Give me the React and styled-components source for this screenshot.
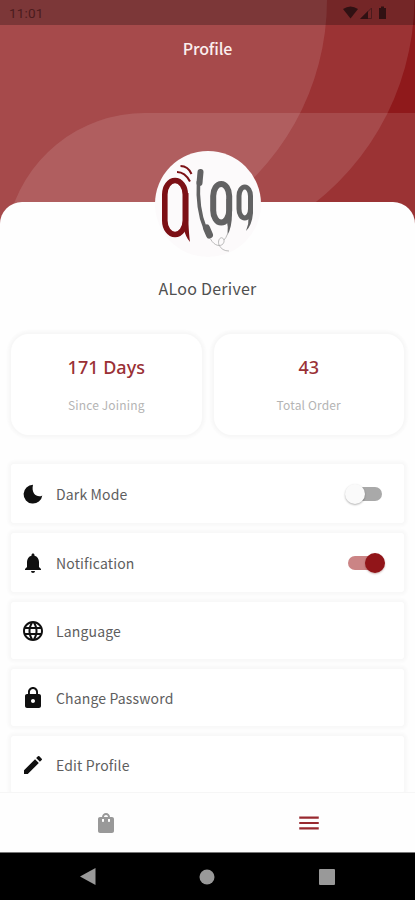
import styled, { createGlobalStyle } from 'styled-components';
import { useState } from 'react';
import {
  MdNotifications, MdLanguage, MdLock, MdEdit, MdShoppingBag, MdMenu,
} from 'react-icons/md';

const GlobalStyle = createGlobalStyle`
  * {
    box-sizing: border-box;
  }
  body {
    margin: 0;
    background: #fff;
    font-family: 'Noto Sans CJK SC', 'Noto Sans', sans-serif;
  }
`;

const Screen = styled.div`
  width: 415px;
  height: 900px;
  display: flex;
  flex-direction: column;
  overflow: hidden;
  background: #fefefe;
`;

const Header = styled.header`
  position: relative;
  z-index: 0;
  flex: none;
  height: 224px;
  background: #8f191b;
`;

const Waves = styled.svg`
  position: absolute;
  top: 0;
  left: 0;
  z-index: -1;
`;

const StatusBar = styled.div`
  height: 25px;
  padding: 0 27px 0 9px;
  display: flex;
  align-items: center;
  justify-content: space-between;
  background: rgba(0, 0, 0, 0.25);
  color: #4b1b1d;
  font-family: Roboto, sans-serif;
  font-size: 13.5px;
  letter-spacing: 0.2px;
`;

const Title = styled.h1`
  margin: 0;
  height: 46px;
  line-height: 46px;
  text-align: center;
  color: #fbeeee;
  font-size: 16px;
  font-weight: 500;
  letter-spacing: -0.15px;
`;

const Sheet = styled.main`
  position: relative;
  flex: 1;
  min-height: 0;
  margin-top: -22px;
  padding: 0 10px;
  display: flex;
  flex-direction: column;
  border-radius: 22px 22px 0 0;
  background: #fefefe;
`;

const Avatar = styled.svg`
  flex: none;
  align-self: center;
  margin-top: -51px;
`;

const Name = styled.h2`
  margin: 18px 0 0;
  height: 26px;
  line-height: 26px;
  text-align: center;
  color: #505050;
  font-size: 16px;
  font-weight: 400;
  letter-spacing: 0.25px;
`;

const Stats = styled.div`
  flex: none;
  margin-top: 33px;
  padding: 0 1px;
  display: grid;
  grid-template-columns: 1fr 1fr;
  gap: 12px;
`;

const StatCard = styled.div`
  height: 101px;
  padding-top: 20px;
  border-radius: 18px;
  background: #fff;
  box-shadow: 0 0 3px 3px #f7f7f7;
  text-align: center;
`;

const StatValue = styled.div`
  line-height: 26px;
  color: #9a3035;
  font-family: 'Noto Sans', sans-serif;
  font-size: 18px;
  font-weight: 500;
`;

const StatLabel = styled.div`
  margin-top: 15px;
  line-height: 20px;
  color: #b4b4b4;
  font-size: 12px;
  letter-spacing: 0.15px;
`;

const Rows = styled.div`
  flex: 1;
  min-height: 0;
  margin: 23px -10px 0;
  padding: 6px 11px 0;
  overflow: hidden;
  display: flex;
  flex-direction: column;
  gap: 10px;
`;

const Row = styled.div`
  flex: none;
  height: ${(props) => (props.$tall ? '59px' : '57px')};
  padding: 0 19px 0 10px;
  display: flex;
  align-items: center;
  border-radius: 3px;
  background: #fff;
  box-shadow: 0 0 3px 3px #f8f8f8;
  color: #101010;
`;

const RowLabel = styled.span`
  flex: 1;
  margin-left: 11px;
  color: #5e5e5e;
  font-size: 14px;
  letter-spacing: 0.15px;
`;

const Switch = styled.button`
  width: 38px;
  height: 22px;
  padding: 0 2px 0 0;
  border: 0;
  background: none;
  display: flex;
  align-items: center;
  justify-content: center;
`;

const Track = styled.span`
  width: 34px;
  height: 14px;
  display: flex;
  align-items: center;
  justify-content: ${(props) => (props.$on ? 'flex-end' : 'flex-start')};
  border-radius: 7px;
  background: ${(props) => (props.$on ? '#cb8485' : '#a9a9a9')};
`;

const Thumb = styled.span`
  flex: none;
  width: 20px;
  height: 20px;
  margin: 0 -3px;
  border-radius: 50%;
  background: ${(props) => (props.$on ? '#911519' : '#fafafa')};
  box-shadow: 0 1px 2px ${(props) => (props.$on ? 'rgba(90, 0, 0, 0.3)' : 'rgba(0, 0, 0, 0.3)')};
`;

const TabBar = styled.nav`
  flex: none;
  height: 60px;
  padding: 0 5px;
  display: grid;
  grid-template-columns: 1fr 1fr;
  place-items: center;
  border-top: 1px solid #f6f6f6;
  background: #fefefe;
`;

const Tab = styled.span`
  display: flex;
  color: ${(props) => (props.$active ? '#98292f' : '#999')};
`;

const SystemBar = styled.div`
  flex: none;
  height: 48px;
  padding: 0 28px;
  display: grid;
  grid-template-columns: repeat(3, 1fr);
  place-items: center;
  border-top: 1px solid #777;
  background: #000;
`;

function MoonIcon() {
  return (
    <svg width="24" height="24" viewBox="-1 -1 24 24">
      <path d="M11 1.8A9.4 9.4 0 1 0 20.3 12.4C16.4 15.2 8.7 11.6 11 1.8Z" fill="currentColor" />
    </svg>
  );
}

function StatusIcons() {
  return (
    <svg width="46" height="16" viewBox="0 0 46 16" fill="#301113">
      <path d="M1 4Q8.5-1 16 4L8.5 13.5Z" />
      <path d="M29.5 3V13.5H19Z" fill="none" stroke="#4b1b1d" />
      <path d="M26 6V14H18Z" />
      <path d="M37 3H39V1.5H42V3H44V14H37Z" />
    </svg>
  );
}

function Logo() {
  return (
    <Avatar width="106" height="106" viewBox="0 0 106 106">
      <circle cx="53" cy="53" r="53" fill="#fcfafb" />
      <g fill="none" stroke="#7c1015">
        <rect x="9.8" y="29.5" width="20.5" height="54" rx="10.2" ry="14" strokeWidth="5.6" />
        <path d="M22 21Q30 21 35 30.5M25.5 15Q33 15 36.5 23" strokeWidth="2" />
      </g>
      <path d="M29 42H33.500V73Q34 84 35 91Q30.500 86 29 78Z" fill="#7c1015" />
      <g fill="none" stroke="#626263">
        <path d="M45.500 21L44.500 32" strokeWidth="6" strokeLinecap="round" />
        <path d="M43.500 30Q42 58 50 77" strokeWidth="3.600" />
        <path d="M51.500 77L54.500 84" strokeWidth="7" strokeLinecap="round" />
        <rect x="58.200" y="33" width="16" height="38.500" rx="8" ry="12" strokeWidth="6" />
        <rect x="84" y="36" width="11.500" height="31" rx="5.750" ry="9" strokeWidth="5" />
      </g>
      <g fill="#626263">
        <path d="M71.500 48H77V62Q77 76 72.500 84Q73.500 76 71.500 68Z" />
        <path d="M93.500 48H98V62Q97 74 91 80Q94 73 93.500 66Z" />
      </g>
      <path
        d="M55.5 88C61 98 70 95 69 89C67 84 62 88 64 94Q67 100 74 100M72.500 83Q71 87 69 89"
        fill="none"
        stroke="#aaa"
        strokeWidth="0.8"
      />
    </Avatar>
  );
}

function Toggle({ on, label, onClick }) {
  return (
    <Switch type="button" role="switch" aria-checked={on} aria-label={label} onClick={onClick}>
      <Track $on={on}>
        <Thumb $on={on} />
      </Track>
    </Switch>
  );
}

export default function App() {
  const [dark, setDark] = useState(false);
  const [notify, setNotify] = useState(true);

  return (
    <Screen>
      <GlobalStyle />
      <Header>
        <Waves width="415" height="224" viewBox="0 0 415 224" fill="#fff" fillOpacity="0.115">
          <path d="M0 0H327A253 253 0 0 1 207 215V224H0Z" />
          <path d="M0 0H414.5A262 262 0 0 1 284 224H0Z" />
          <path d="M415 113H145A140 140 0 0 0 8 224H415Z" />
        </Waves>
        <StatusBar>
          <span>11:01</span>
          <StatusIcons />
        </StatusBar>
        <Title>Profile</Title>
      </Header>

      <Sheet>
        <Logo />
        <Name>ALoo Deriver</Name>
        <Stats>
          <StatCard>
            <StatValue>171 Days</StatValue>
            <StatLabel>Since Joining</StatLabel>
          </StatCard>
          <StatCard>
            <StatValue>43</StatValue>
            <StatLabel>Total Order</StatLabel>
          </StatCard>
        </Stats>

        <Rows>
          <Row $tall>
            <MoonIcon />
            <RowLabel>Dark Mode</RowLabel>
            <Toggle on={dark} label="Dark Mode" onClick={() => setDark(!dark)} />
          </Row>
          <Row $tall>
            <MdNotifications size={24} />
            <RowLabel>Notification</RowLabel>
            <Toggle on={notify} label="Notification" onClick={() => setNotify(!notify)} />
          </Row>
          <Row>
            <MdLanguage size={24} />
            <RowLabel>Language</RowLabel>
          </Row>
          <Row>
            <MdLock size={24} />
            <RowLabel>Change Password</RowLabel>
          </Row>
          <Row>
            <MdEdit size={24} />
            <RowLabel>Edit Profile</RowLabel>
          </Row>
        </Rows>
      </Sheet>

      <TabBar>
        <Tab><MdShoppingBag size={24} /></Tab>
        <Tab $active><MdMenu size={26} /></Tab>
      </TabBar>
      <SystemBar>
        <svg width="16" height="17" viewBox="0 0 16 17"><path d="M0 8.5L15.5 0V17Z" fill="#999" /></svg>
        <svg width="16" height="16" viewBox="0 0 16 16"><circle cx="8" cy="8" r="7.5" fill="#999" /></svg>
        <svg width="16" height="16" viewBox="0 0 16 16"><rect width="16" height="16" rx="1" fill="#999" /></svg>
      </SystemBar>
    </Screen>
  );
}
